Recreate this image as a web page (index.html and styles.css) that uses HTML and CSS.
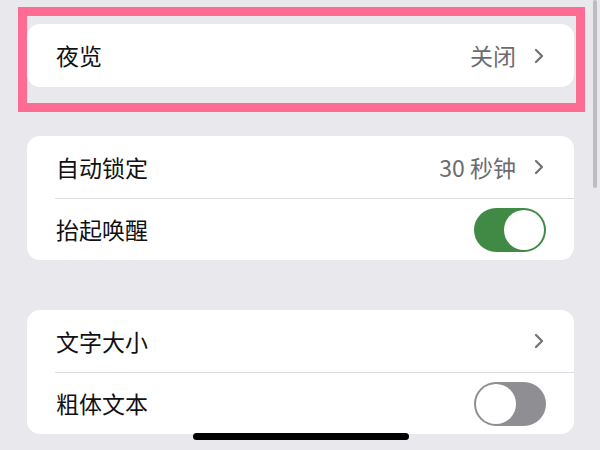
FILE: index.html
```html
<!DOCTYPE html>
<html lang="zh-CN">
<head>
<meta charset="utf-8">
<link rel="stylesheet" href="styles.css">
</head>
<body>
<div class="screen">
  <div class="highlight">
    <div class="card">
      <div class="row">
        <span class="label">夜览</span>
        <span class="value">关闭</span>
        <svg class="chev" viewBox="0 0 10 16"><path d="M2 2 L8 8 L2 14"/></svg>
      </div>
    </div>
  </div>

  <div class="card card-2">
    <div class="row">
      <span class="label">自动锁定</span>
      <span class="value">30 秒钟</span>
      <svg class="chev" viewBox="0 0 10 16"><path d="M2 2 L8 8 L2 14"/></svg>
    </div>
    <div class="row">
      <span class="label">抬起唤醒</span>
      <span class="toggle on"><span class="knob"></span></span>
    </div>
  </div>

  <div class="card card-3">
    <div class="row">
      <span class="label">文字大小</span>
      <svg class="chev" viewBox="0 0 10 16"><path d="M2 2 L8 8 L2 14"/></svg>
    </div>
    <div class="row">
      <span class="label">粗体文本</span>
      <span class="toggle off"><span class="knob"></span></span>
    </div>
  </div>

  <div class="scrollbar"></div>
  <div class="home-bar"></div>
</div>
</body>
</html>
```
FILE: styles.css
```css
* { box-sizing: border-box; }
html, body {
  margin: 0;
  padding: 0;
}
body {
  background: #e9e8ed;
  font-family: "Noto Sans CJK SC", "Noto Sans", sans-serif;
}
.screen {
  position: relative;
  width: 600px;
  height: 450px;
  overflow: hidden;
  background: #e9e8ed;
  padding-top: 7px;
}
.highlight {
  margin-left: 18px;
  width: 567px;
  border: 9px solid #fe6b93;
  padding: 8px 1px 16px 0;
}
.card {
  background: #ffffff;
  border-radius: 13px;
  width: 547px;
  overflow: hidden;
}
.card-2 {
  margin-left: 27px;
  margin-top: 24px;
}
.card-3 {
  margin-left: 27px;
  margin-top: 50px;
}
.row {
  display: flex;
  align-items: center;
  height: 63px;
  padding: 0 30px 0 29px;
  position: relative;
}
.card-2 .row + .row,
.card-3 .row + .row {
  border-top: 1px solid #dcdce0;
  margin-left: 28px;
  padding-left: 1px;
  height: 62px;
}
.card-2 .row:first-child,
.card-3 .row:first-child {
  height: 62px;
}
.label {
  flex: 1;
  font-size: 23px;
  color: #111113;
  line-height: 1;
}
.value {
  font-size: 23px;
  color: #6c6c70;
  line-height: 1;
  margin-right: 18px;
}
.chev {
  width: 10px;
  height: 16px;
  fill: none;
  stroke: #747478;
  stroke-width: 2.3;
  stroke-linecap: round;
  stroke-linejoin: round;
}
.toggle {
  width: 72px;
  height: 44px;
  border-radius: 22px;
  position: relative;
  margin-right: -2px;
  display: block;
}
.toggle.on { background: #418a45; }
.toggle.off { background: #8e8e93; }
.knob {
  position: absolute;
  top: 2px;
  width: 40px;
  height: 40px;
  border-radius: 50%;
  background: #ffffff;
}
.toggle.on .knob { right: 2px; }
.toggle.off .knob { left: 2px; }
.scrollbar {
  position: absolute;
  right: 3px;
  top: 0;
  width: 4px;
  height: 188px;
  border-radius: 2px;
  background: #bdbdc1;
}
.home-bar {
  position: absolute;
  left: 193px;
  top: 433px;
  width: 216px;
  height: 7px;
  border-radius: 4px;
  background: #000000;
}
```
